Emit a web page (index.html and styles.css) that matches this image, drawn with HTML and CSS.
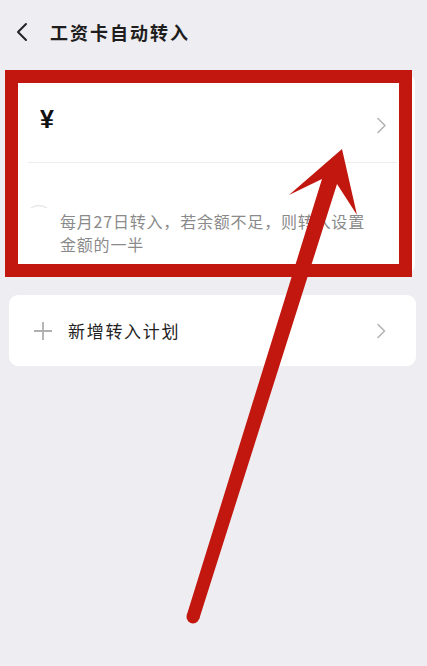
FILE: index.html
```html
<!DOCTYPE html>
<html lang="zh-CN">
<head>
<meta charset="utf-8">
<title>工资卡自动转入</title>
<link rel="stylesheet" href="styles.css">
</head>
<body>
<div class="page">
  <header class="header">
    <svg class="back" width="12" height="20" viewBox="0 0 12 20"><path d="M10 2 L2 10 L10 18" fill="none" stroke="#222" stroke-width="2" stroke-linecap="round" stroke-linejoin="round"/></svg>
    <h1 class="title">工资卡自动转入</h1>
  </header>

  <section class="card card-plan">
    <div class="amount-row">
      <span class="yen">¥</span>
      <svg class="chev chev-plan" width="11" height="17" viewBox="0 0 11 17"><path d="M2 1.5 L9 8.5 L2 15.5" fill="none" stroke="#b4b4b4" stroke-width="1.6" stroke-linecap="round" stroke-linejoin="round"/></svg>
    </div>
    <div class="divider"></div>
    <div class="rule">
      <svg class="radio" width="20" height="8" viewBox="0 0 20 8"><path d="M2 6 Q10 1 18 6" fill="none" stroke="#e6e6e6" stroke-width="1.4"/></svg>
      <p class="rule-text">每月27日转入，若余额不足，则转入设置金额的一半</p>
    </div>
  </section>

  <section class="card card-add">
    <svg class="plus" width="20" height="20" viewBox="0 0 20 20"><path d="M10 1 V19 M1 10 H19" fill="none" stroke="#b0b0b0" stroke-width="1.8"/></svg>
    <span class="add-text">新增转入计划</span>
    <svg class="chev chev-add" width="11" height="16" viewBox="0 0 11 16"><path d="M2 1.5 L8.5 8 L2 14.5" fill="none" stroke="#b4b4b4" stroke-width="1.6" stroke-linecap="round" stroke-linejoin="round"/></svg>
  </section>

  <div class="highlight-box"></div>
  <svg class="arrow" width="427" height="666" viewBox="0 0 427 666">
    <path d="M186.8 615 L322 179 L289 195 L342 149 L357 215 L337 184 L199.2 619 Z" fill="#c1170f"/>
    <circle cx="193" cy="617" r="6.5" fill="#c1170f"/>
  </svg>
</div>
</body>
</html>
```
FILE: styles.css
```css
html, body {
  margin: 0;
  padding: 0;
  background: #eeedf1;
}

body {
  font-family: "Noto Sans CJK SC", "Noto Sans", sans-serif;
  color: #222;
}

.page {
  position: relative;
  width: 427px;
  height: 666px;
  overflow: hidden;
}

.header {
  height: 64px;
  display: flex;
  align-items: center;
  padding-left: 16px;
  box-sizing: border-box;
}

.back {
  display: block;
}

.title {
  margin: 0 0 0 22px;
  font-size: 18px;
  font-weight: 700;
  letter-spacing: 2px;
  line-height: 1;
  color: #1e1e1e;
}

.card {
  background: #fff;
  border-radius: 9px;
}

.card-plan {
  margin: 10px 12px 0 10px;
  height: 200px;
}

.amount-row {
  height: 88px;
  display: flex;
  align-items: center;
  justify-content: space-between;
  padding: 12px 28px 0 30px;
  box-sizing: border-box;
}

.yen {
  font-family: "Liberation Sans", sans-serif;
  font-size: 25px;
  font-weight: 700;
  color: #111;
  margin-top: -10px;
}

.chev {
  display: block;
}

.chev-plan {
  margin-top: 2px;
}

.divider {
  height: 1px;
  background: #ececec;
  margin: 0 18px;
}

.rule {
  position: relative;
  padding: 47px 0 0 50px;
}

.radio {
  position: absolute;
  left: 19px;
  top: 39px;
}

.rule-text {
  margin: 0;
  width: 314px;
  font-size: 16px;
  line-height: 23px;
  letter-spacing: 0.8px;
  color: #8a8a8a;
}

.card-add {
  margin: 21px 11px 0 9px;
  height: 71px;
  display: flex;
  align-items: center;
  padding: 0 29px 0 24px;
  box-sizing: border-box;
}

.plus {
  display: block;
}

.add-text {
  margin-left: 15px;
  font-size: 17px;
  letter-spacing: 1.7px;
  color: #222;
  flex: 1;
}

.highlight-box {
  position: absolute;
  left: 5px;
  top: 70px;
  width: 407px;
  height: 207px;
  border: 13px solid #c1170f;
  box-sizing: border-box;
}

.arrow {
  position: absolute;
  left: 0;
  top: 0;
  pointer-events: none;
}
```
